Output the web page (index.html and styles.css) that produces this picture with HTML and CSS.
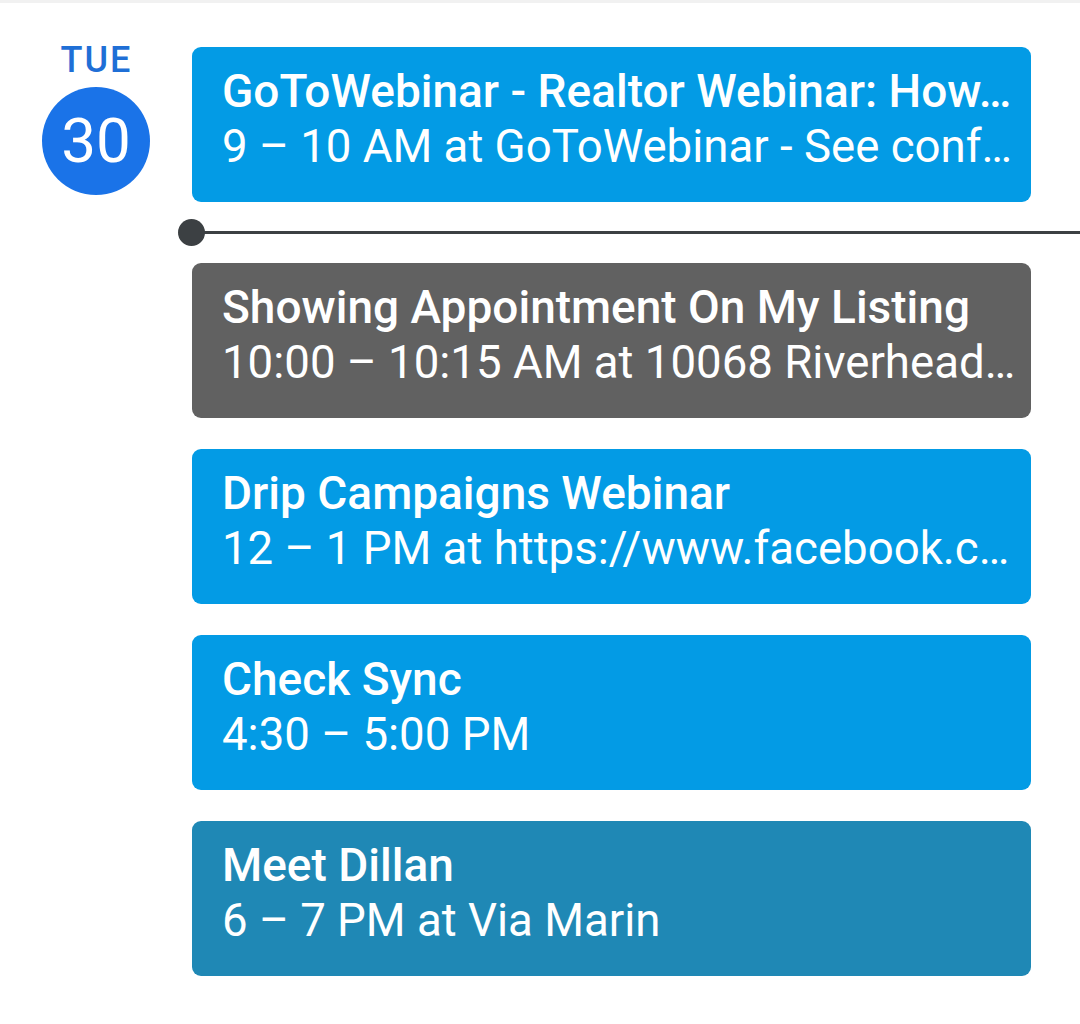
FILE: index.html
```html
<!DOCTYPE html>
<html lang="en">
<head>
<meta charset="utf-8">
<title>Schedule</title>
<link rel="stylesheet" href="styles.css">
</head>
<body>
<div class="topbar"></div>
<main class="day">
  <div class="date">
    <div class="weekday">TUE</div>
    <div class="daynum">30</div>
  </div>
  <div class="events">
    <div class="event blue">
      <div class="title">GoToWebinar - Realtor Webinar: How…</div>
      <div class="sub">9 – 10 AM at GoToWebinar - See conf…</div>
    </div>
    <div class="now"><span class="now-dot"></span></div>
    <div class="event grey">
      <div class="title">Showing Appointment On My Listing</div>
      <div class="sub">10:00 – 10:15 AM at 10068 Riverhead…</div>
    </div>
    <div class="event blue">
      <div class="title">Drip Campaigns Webinar</div>
      <div class="sub">12 – 1 PM at https://www.facebook.c…</div>
    </div>
    <div class="event blue">
      <div class="title">Check Sync</div>
      <div class="sub">4:30 – 5:00 PM</div>
    </div>
    <div class="event teal">
      <div class="title">Meet Dillan</div>
      <div class="sub">6 – 7 PM at Via Marin</div>
    </div>
  </div>
</main>
</body>
</html>
```
FILE: styles.css
```css
html, body {
  margin: 0;
  padding: 0;
  background: #ffffff;
}
body {
  font-family: Roboto, "Noto Sans", "Liberation Sans", sans-serif;
  width: 1080px;
  height: 1024px;
  overflow: hidden;
}
.topbar {
  height: 3px;
  background: #f1f1f1;
}
.day {
  display: flex;
  align-items: flex-start;
}
.date {
  width: 192px;
  flex: none;
  display: flex;
  flex-direction: column;
  align-items: center;
  padding-top: 37px;
}
.weekday {
  color: #1f6fd6;
  font-size: 36px;
  line-height: 41px;
  font-weight: 500;
  letter-spacing: 2px;
  margin-left: 1px;
  margin-bottom: 6px;
}
.daynum {
  width: 108px;
  height: 108px;
  border-radius: 50%;
  background: #1a73e8;
  color: #ffffff;
  font-size: 62px;
  font-weight: 400;
  display: flex;
  align-items: center;
  justify-content: center;
  line-height: 1;
}
.events {
  flex: 1;
  display: flex;
  flex-direction: column;
  gap: 31px;
  padding-top: 44px;
}
.event {
  width: 839px;
  height: 155px;
  box-sizing: border-box;
  border-radius: 9px;
  padding: 17px 6px 0 30px;
  color: #ffffff;
}
.event.blue { background: #039be5; }
.event.grey { background: #616161; }
.event.teal { background: #1f88b5; }
.title, .sub {
  line-height: 55px;
  white-space: nowrap;
  overflow: hidden;
  text-overflow: ellipsis;
}
.title {
  font-size: 46px;
  font-weight: 500;
}
.sub {
  font-size: 45.6px;
  font-weight: 400;
}
.now {
  position: relative;
  height: 3px;
  background: #3c4043;
  margin: -2px 0;
}
.now-dot {
  position: absolute;
  left: -14px;
  top: -12px;
  width: 27px;
  height: 27px;
  border-radius: 50%;
  background: #3c4043;
}
```
